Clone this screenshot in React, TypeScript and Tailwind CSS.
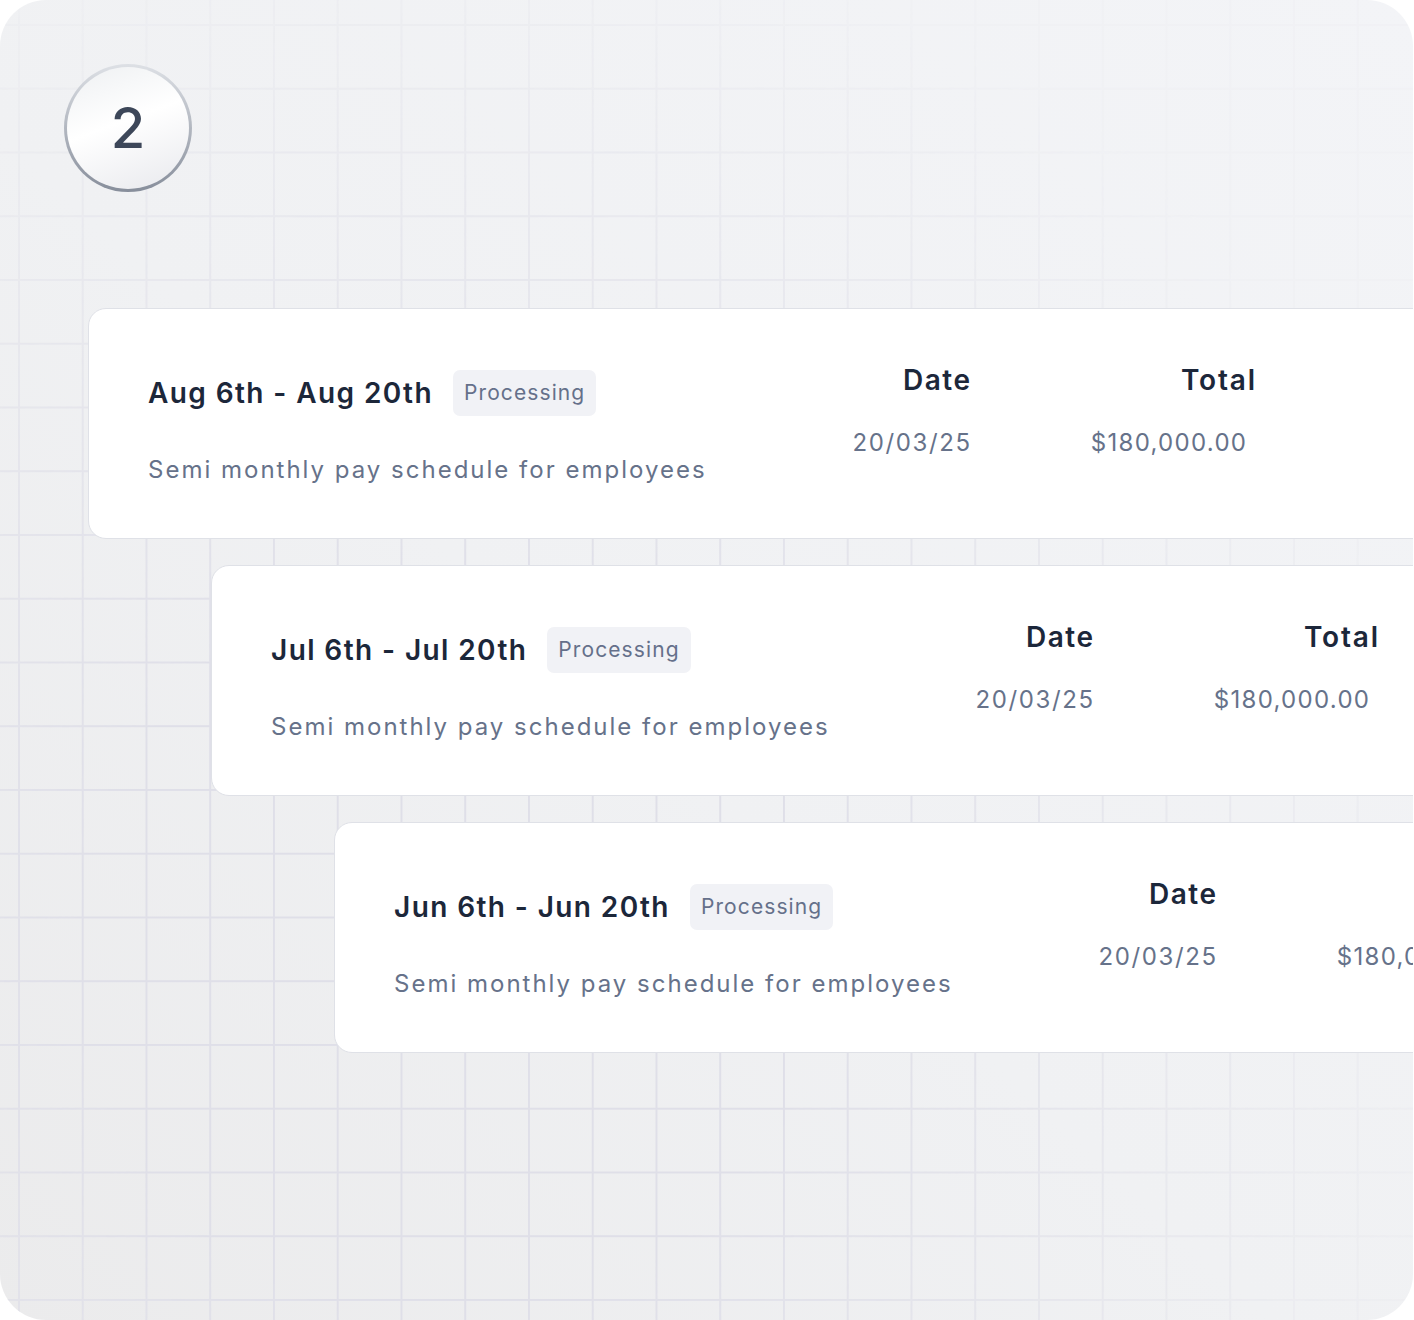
type Run = {
  range: string;
  date: string;
  total: string;
  indent: string;
};

const runs: Run[] = [
  { range: "Aug 6th - Aug 20th", date: "20/03/25", total: "$180,000.00", indent: "ml-[88px] mt-[116px]" },
  { range: "Jul 6th - Jul 20th", date: "20/03/25", total: "$180,000.00", indent: "ml-[211px] mt-[26px]" },
  { range: "Jun 6th - Jun 20th", date: "20/03/25", total: "$180,000.00", indent: "ml-[334px] mt-[26px]" },
];

function StepBadge() {
  return (
    <div className="ml-[64px] mt-[64px] h-[128px] w-[128px] rounded-full bg-[linear-gradient(to_bottom,#dde0e5,#878e9b)] p-[3px]">
      <div className="flex h-full w-full items-center justify-center rounded-full bg-[linear-gradient(160deg,#eef0f2,#ffffff_45%,#e8e9ed)]">
        <span className="text-[56px] font-medium leading-none text-[#3d4759]">2</span>
      </div>
    </div>
  );
}

function PayRunCard({ run }: { run: Run }) {
  return (
    <div
      className={`${run.indent} flex h-[231px] w-[1400px] shrink-0 rounded-[18px] border-[1.5px] border-[#dfe1e7] bg-white`}
    >
      <div className="w-[660px] shrink-0 pl-[59px] pt-[61px]">
        <div className="flex items-center gap-[20px]">
          <h3 className="text-[28px] font-semibold leading-none tracking-[1.4px] text-[#1c273a]">{run.range}</h3>
          <span className="rounded-[7px] bg-[#f1f2f6] px-[11px] py-[10px] text-[21px] leading-[26px] tracking-[1.1px] text-[#65708a]">
            Processing
          </span>
        </div>
        <p className="mt-[39px] text-[24px] leading-[30px] tracking-[2px] text-[#66728a]">
          Semi monthly pay schedule for employees
        </p>
      </div>
      <div className="flex w-[221px] shrink-0 flex-col items-end pt-[54px]">
        <span className="-mr-[1.5px] text-[28px] font-semibold leading-[34px] tracking-[1.5px] text-[#1c273a]">Date</span>
        <span className="-mr-[1.6px] mt-[31px] text-[24px] leading-[30px] tracking-[1.6px] text-[#66728a]">{run.date}</span>
      </div>
      <div className="flex w-[285px] shrink-0 flex-col items-end pt-[54px]">
        <span className="-mr-[1.8px] text-[28px] font-semibold leading-[34px] tracking-[1.8px] text-[#1c273a]">Total</span>
        <span className="mr-[7.7px] mt-[31px] text-[24px] leading-[30px] tracking-[1.3px] text-[#66728a]">
          {run.total}
        </span>
      </div>
    </div>
  );
}

export default function App() {
  return (
    <div className="relative h-[1320px] w-[1413px] overflow-hidden rounded-[46px] bg-[linear-gradient(to_top_right,#ebebec,#f0f1f3_45%,#f3f4f7)] font-['Inter','Liberation_Sans',sans-serif]">
      {/* faded grid paper behind the cards */}
      <div className="pointer-events-none absolute inset-0 bg-[linear-gradient(to_right,#dfdfe8_1.5px,transparent_1.5px),linear-gradient(to_bottom,#dfdfe8_1.5px,transparent_1.5px)] bg-[length:63.75px_63.75px] bg-[position:18px_24px] [mask-image:radial-gradient(circle_1050px_at_450px_950px,black_35%,rgba(0,0,0,0.08))]" />
      <div className="relative flex flex-col">
        <StepBadge />
        {runs.map((run) => (
          <PayRunCard key={run.range} run={run} />
        ))}
      </div>
    </div>
  );
}
